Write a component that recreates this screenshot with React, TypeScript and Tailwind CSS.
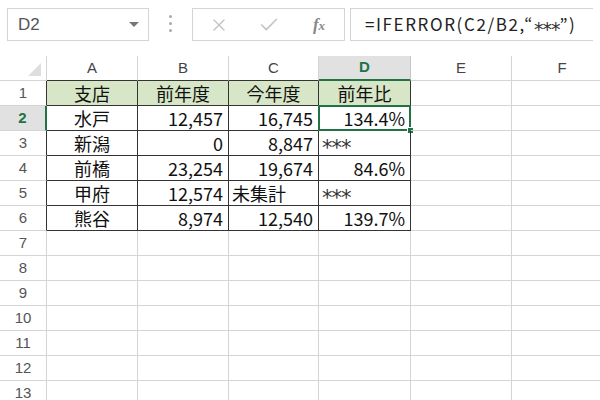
import { X, Check } from 'lucide-react'

const cols = [
  { key: 'A', w: 'w-[91px]' },
  { key: 'B', w: 'w-[91px]' },
  { key: 'C', w: 'w-[90px]' },
  { key: 'D', w: 'w-[92px]' },
  { key: 'E', w: 'w-[101px]' },
  { key: 'F', w: 'w-[101px]' },
]

type Cell = { text: string; align: 'left' | 'right' | 'center' }

const data: Cell[][] = [
  [
    { text: '支店', align: 'center' },
    { text: '前年度', align: 'center' },
    { text: '今年度', align: 'center' },
    { text: '前年比', align: 'center' },
  ],
  [
    { text: '水戸', align: 'center' },
    { text: '12,457', align: 'right' },
    { text: '16,745', align: 'right' },
    { text: '134.4%', align: 'right' },
  ],
  [
    { text: '新潟', align: 'center' },
    { text: '0', align: 'right' },
    { text: '8,847', align: 'right' },
    { text: '***', align: 'left' },
  ],
  [
    { text: '前橋', align: 'center' },
    { text: '23,254', align: 'right' },
    { text: '19,674', align: 'right' },
    { text: '84.6%', align: 'right' },
  ],
  [
    { text: '甲府', align: 'center' },
    { text: '12,574', align: 'right' },
    { text: '未集計', align: 'left' },
    { text: '***', align: 'left' },
  ],
  [
    { text: '熊谷', align: 'center' },
    { text: '8,974', align: 'right' },
    { text: '12,540', align: 'right' },
    { text: '139.7%', align: 'right' },
  ],
]

const cjk = "font-['MS_PGothic','Noto_Sans_CJK_JP',sans-serif]"

function Stars({ size }: { size: string }) {
  return (
    <span className={`relative top-[5px] font-['DejaVu_Sans',sans-serif] ${size} tracking-[-1px] text-[#333]`}>
      ***
    </span>
  )
}

function Toolbar() {
  return (
    <div className="flex h-[56px] items-start gap-0 px-[7px] pt-[8px]">
      <div className="flex h-[33px] w-[142px] items-center justify-between border border-[#d4d4d4] pl-[10px] pr-[9px]">
        <span className="font-['Liberation_Sans',sans-serif] text-[17px] text-[#555]">D2</span>
        <span className="h-0 w-0 border-x-[5px] border-t-[5px] border-x-transparent border-t-[#777]" />
      </div>
      <div className="flex w-[43px] flex-col items-center gap-[4px] pt-[7px]">
        <span className="h-[3px] w-[3px] rounded-full bg-[#aaa]" />
        <span className="h-[3px] w-[3px] rounded-full bg-[#aaa]" />
        <span className="h-[3px] w-[3px] rounded-full bg-[#aaa]" />
      </div>
      <div className="flex h-[33px] w-[153px] items-center border border-[#d4d4d4]">
        <div className="flex w-[50px] justify-center pl-[2px]">
          <X size={20} strokeWidth={1.6} className="text-[#c4c4c4]" />
        </div>
        <div className="flex w-[52px] justify-center">
          <Check size={22} strokeWidth={1.8} className="text-[#c4c4c4]" />
        </div>
        <div className="flex w-[48px] justify-center">
          <span className="font-['Liberation_Serif',serif] text-[17px] font-bold italic text-[#888]">
            f<span className="text-[13px]">x</span>
          </span>
        </div>
      </div>
      <div className="ml-[5px] flex h-[33px] flex-1 items-center border border-r-0 border-[#d4d4d4] pl-[14px]">
        <span className={`${cjk} whitespace-nowrap text-[17px] tracking-[1.6px] text-[#222]`}>
          =IFERROR(C2/B2,“<Stars size="text-[19px]" />”)
        </span>
      </div>
    </div>
  )
}

function HeaderRow() {
  return (
    <div className="flex h-[25px]">
      <div className="relative w-[47px] shrink-0 border-r border-b border-[#d4d4d4]">
        <span className="absolute right-[5px] bottom-[4px] h-0 w-0 border-b-0 border-t-[13px] border-r-[13px] border-l-[13px] border-t-transparent border-l-transparent border-r-[#dedede]" />
      </div>
      {cols.map((c, i) => {
        const active = c.key === 'D'
        const inTable = i < 4
        return (
          <div
            key={c.key}
            className={`${c.w} flex shrink-0 items-center justify-center border-r font-['Liberation_Sans',sans-serif] text-[15px] ${
              active
                ? 'border-b-2 border-r-[#c6c6c6] border-b-[#217346] bg-[#e1e1e1] font-bold text-[#217346]'
                : inTable
                  ? 'border-b border-r-[#d4d4d4] border-b-[#333] text-[#444]'
                  : 'border-b border-[#d4d4d4] text-[#444]'
            }`}
          >
            {c.key}
          </div>
        )
      })}
      <div className="flex-1 border-b border-[#d4d4d4]" />
    </div>
  )
}

function Row({ n }: { n: number }) {
  const row = data[n - 1]
  const inTable = n <= 6
  const active = n === 2
  return (
    <div className="flex h-[25px]">
      <div
        className={`flex w-[47px] shrink-0 items-center justify-center border-b border-b-[#d4d4d4] font-['Liberation_Sans',sans-serif] text-[15px] ${
          active
            ? 'border-r-2 border-r-[#217346] bg-[#e1e1e1] font-bold text-[#217346]'
            : inTable
              ? 'border-r border-r-[#333] text-[#555]'
              : 'border-r border-r-[#d4d4d4] text-[#555]'
        }`}
      >
        {n}
      </div>
      {cols.map((c, i) => {
        const cell = row && i < 4 ? row[i] : null
        const tbl = inTable && i < 4
        const selected = n === 2 && c.key === 'D'
        return (
          <div
            key={c.key}
            className={`${c.w} relative flex shrink-0 items-center border-r border-b ${
              tbl ? 'border-[#333]' : 'border-[#d4d4d4]'
            } ${n === 1 && tbl ? 'bg-[#d7e6c6]' : ''} ${
              cell?.align === 'right'
                ? 'justify-end pr-[5px]'
                : cell?.align === 'left'
                  ? 'justify-start pl-[3px]'
                  : 'justify-center'
            } ${cjk} text-[18px] leading-none text-[#111]`}
          >
            {cell?.text === '***' ? <Stars size="text-[21px]" /> : cell?.text}
            {selected && (
              <>
                <span className="pointer-events-none absolute -top-px -right-px -bottom-px -left-px border-2 border-[#217346]" />
                <span className="absolute -right-[4px] -bottom-[4px] h-[7px] w-[7px] border border-white bg-[#217346]" />
              </>
            )}
          </div>
        )
      })}
      <div className="flex-1 border-b border-[#d4d4d4]" />
    </div>
  )
}

export default function App() {
  return (
    <div className="h-[400px] w-[600px] overflow-hidden bg-white">
      <Toolbar />
      <HeaderRow />
      {Array.from({ length: 13 }, (_, i) => (
        <Row key={i} n={i + 1} />
      ))}
    </div>
  )
}
